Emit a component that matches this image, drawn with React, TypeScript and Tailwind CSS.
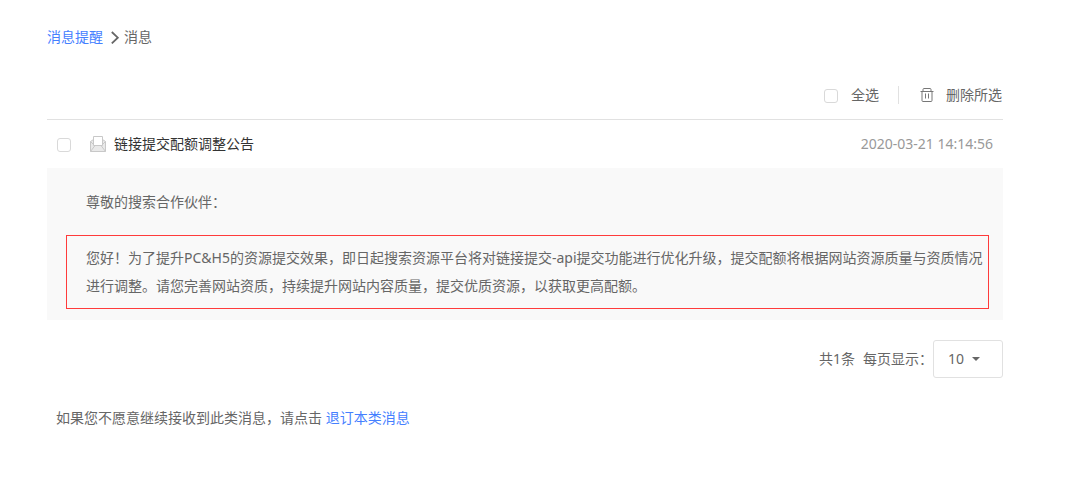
import React, { useState } from "react";

const checkboxClass =
  "mt-0.5 block size-3.5 shrink-0 cursor-pointer appearance-none rounded-[3px] border border-[#d9d9d9] bg-white checked:border-[#4580ff] checked:bg-[#4580ff]";

function ChevronIcon() {
  return (
    <svg className="ml-[7px] mr-1 h-3.5 w-2.5" viewBox="0 0 10 14" fill="none" aria-hidden="true">
      <path d="M1.8 2L7.8 7.7L1.8 13.4" stroke="#666" strokeWidth="1.8" />
    </svg>
  );
}

function TrashIcon() {
  return (
    <svg className="h-3.5 w-3.5" viewBox="0 0 14 14" fill="none" stroke="#777" aria-hidden="true">
      <path d="M0.5 3.5H13.5M3 3.5V1.5Q3 0.5 4 0.5H10Q11 0.5 11 1.5V3.5M2 3.5V12.5Q2 13.5 3 13.5H11Q12 13.5 12 12.5V3.5" />
      <path d="M5.5 5.5V10.5M8.5 5.5V10.5" />
    </svg>
  );
}

function MailIcon() {
  return (
    <svg className="h-4 w-4" viewBox="0 0 16 16" fill="none" stroke="#c8c8c8" aria-hidden="true">
      <path d="M0.5 5.5L3.5 3.5H12.5L15.5 5.5V15.5H0.5Z" fill="#e9e9e9" />
      <path d="M3.5 9.5V0.5H12.5V9.5Z" fill="#fff" />
      <path d="M0.5 5.5L4.5 9.5H11.5L15.5 5.5M0.5 15.5L5 9.5M15.5 15.5L11 9.5" />
    </svg>
  );
}

function Breadcrumb() {
  return (
    <nav className="flex h-5 items-center">
      <a href="#messages" className="text-[#4580ff]">
        消息提醒
      </a>
      <ChevronIcon />
      <span>消息</span>
    </nav>
  );
}

function App() {
  const [checked, setChecked] = useState(false);
  const [pageSize, setPageSize] = useState("10");

  return (
    <main className="pt-[27px] pr-[62px] pb-12 pl-[47px] font-['Noto_Sans','Noto_Sans_CJK_SC',sans-serif] text-sm leading-5 text-[#666]">
      <Breadcrumb />

      <div className="mt-6 flex h-[49px] items-center justify-end border-b border-[#e1e1e1] pr-px">
        <label className="flex cursor-pointer items-center gap-[13px]">
          <input
            type="checkbox"
            className={checkboxClass}
            checked={checked}
            onChange={(e) => setChecked(e.target.checked)}
          />
          全选
        </label>
        <span className="ml-[19px] h-[18px] w-px bg-[#e1e1e1]" />
        <button type="button" className="ml-[21px] flex cursor-pointer items-center gap-3">
          <TrashIcon />
          删除所选
        </button>
      </div>

      <article>
        <header className="flex h-12 items-center px-2.5">
          <input
            type="checkbox"
            aria-label="链接提交配额调整公告"
            className={checkboxClass}
            checked={checked}
            onChange={(e) => setChecked(e.target.checked)}
          />
          <h2 className="ml-[19px] flex items-center gap-2 text-[#333]">
            <MailIcon />
            链接提交配额调整公告
          </h2>
          <time className="ml-auto text-[#999]">2020-03-21 14:14:56</time>
        </header>
        <div className="bg-[#f9f9f9] pt-5 pr-3.5 pb-[11px] pl-[19px] leading-7">
          <p className="pl-5">尊敬的搜索合作伙伴：</p>
          <p className="mt-[19px] border border-[#ff3b3b] py-2 pr-1 pl-[19px]">
            您好！为了提升PC&amp;H5的资源提交效果，即日起搜索资源平台将对链接提交-api提交功能进行优化升级，提交配额将根据网站资源质量与资质情况进行调整。请您完善网站资质，持续提升网站内容质量，提交优质资源，以获取更高配额。
          </p>
        </div>
      </article>

      <div className="mt-5 flex items-center justify-end">
        <span>共1条</span>
        <label htmlFor="page-size" className="ml-2">
          每页显示：
        </label>
        <div className="relative">
          <select
            id="page-size"
            className="block h-[38px] w-[70px] cursor-pointer appearance-none rounded-[3px] border border-[#e1e1e1] bg-white pl-3.5"
            value={pageSize}
            onChange={(e) => setPageSize(e.target.value)}
          >
            <option>10</option>
            <option>20</option>
            <option>50</option>
          </select>
          <svg
            className="pointer-events-none absolute top-[17px] right-[23px] h-1 w-2"
            viewBox="0 0 8 4"
            aria-hidden="true"
          >
            <path d="M0 0H8L4 4Z" fill="#666" />
          </svg>
        </div>
      </div>

      <p className="mt-[30px] pl-[9px]">
        如果您不愿意继续接收到此类消息，请点击{" "}
        <a href="#unsubscribe" className="text-[#4580ff]">
          退订本类消息
        </a>
      </p>
    </main>
  );
}

export default App;
